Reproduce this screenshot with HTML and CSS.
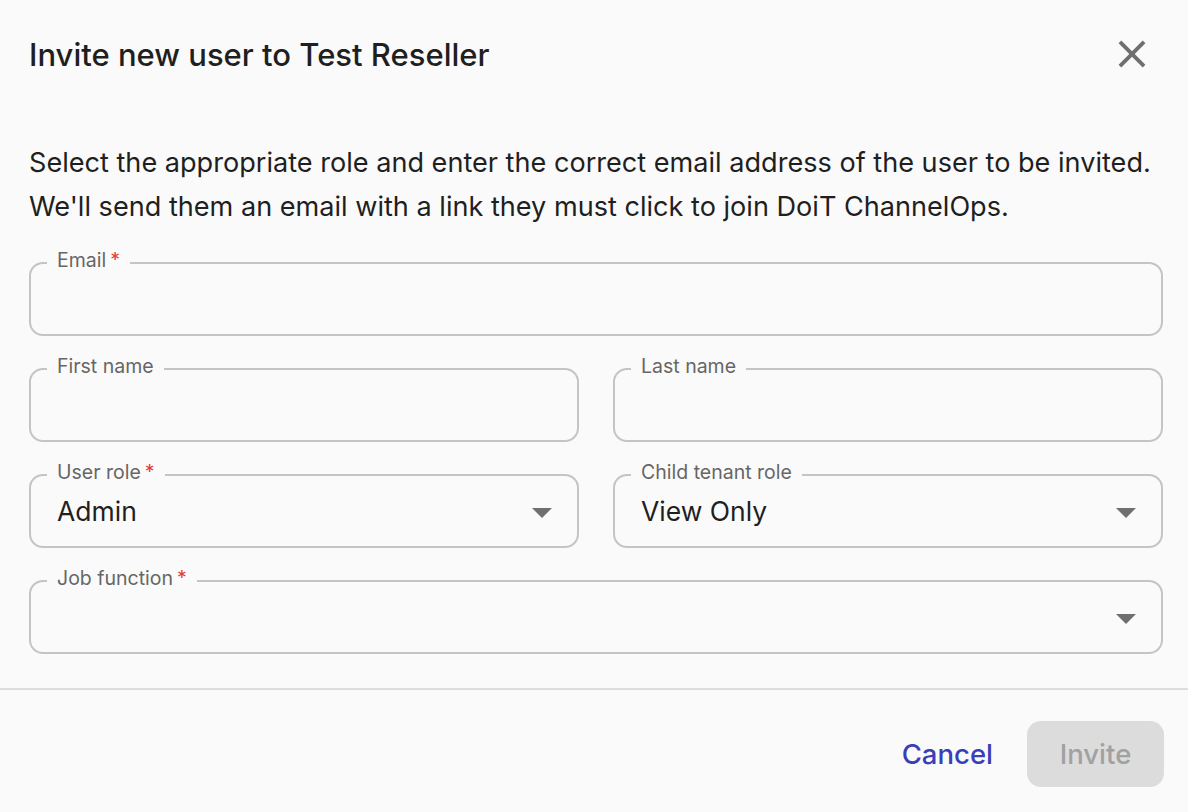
FILE: index.html
```html
<!DOCTYPE html>
<html>
<head>
<meta charset="utf-8">
<link rel="stylesheet" href="styles.css">
</head>
<body>
<div class="dialog">
  <div class="header">
    <h1 class="title">Invite new user to Test Reseller</h1>
    <button class="close" aria-label="Close">
      <svg width="46" height="46" viewBox="0 0 24 24"><path d="M19 6.41 17.59 5 12 10.59 6.41 5 5 6.41 10.59 12 5 17.59 6.41 19 12 13.41 17.59 19 19 17.59 13.41 12z" fill="#6f6f6f"/></svg>
    </button>
  </div>
  <div class="content">
    <p class="desc">Select the appropriate role and enter the correct email address of the user to be invited. We'll send them an email with a link they must click to join DoiT ChannelOps.</p>
    <div class="form">
      <fieldset class="field full"><legend><span class="lbl">Email<span class="req">*</span></span></legend><div class="value"></div></fieldset>
      <div class="row">
        <fieldset class="field"><legend><span class="lbl">First name</span></legend><div class="value"></div></fieldset>
        <fieldset class="field"><legend><span class="lbl">Last name</span></legend><div class="value"></div></fieldset>
      </div>
      <div class="row">
        <fieldset class="field select"><legend><span class="lbl">User role<span class="req">*</span></span></legend><div class="value">Admin</div><span class="arrow"></span></fieldset>
        <fieldset class="field select"><legend><span class="lbl">Child tenant role</span></legend><div class="value">View Only</div><span class="arrow"></span></fieldset>
      </div>
      <fieldset class="field full select"><legend><span class="lbl">Job function<span class="req">*</span></span></legend><div class="value"></div><span class="arrow"></span></fieldset>
    </div>
  </div>
  <div class="actions">
    <button class="btn cancel">Cancel</button>
    <button class="btn invite" disabled>Invite</button>
  </div>
</div>
</body>
</html>
```
FILE: styles.css
```css
html, body {
  margin: 0;
  padding: 0;
  background: #fafafa;
}
body {
  font-family: Inter, "Noto Sans", sans-serif;
  color: #1f1f1f;
}
.dialog {
  width: 1188px;
  height: 812px;
  display: flex;
  flex-direction: column;
  box-sizing: border-box;
}
.header {
  display: flex;
  align-items: center;
  justify-content: space-between;
  padding: 29px 32px 0 29px;
  height: 50px;
}
.title {
  margin: 0;
  font-size: 31px;
  font-weight: 500;
  letter-spacing: 0;
  color: #1f1f1f;
}
.close {
  background: none;
  border: none;
  padding: 0;
  width: 48px;
  height: 48px;
  display: flex;
  align-items: center;
  justify-content: center;
  cursor: pointer;
}
.content {
  padding: 62px 20px 0 29px;
}
.desc {
  margin: 0 0 23px;
  font-size: 27.1px;
  line-height: 44px;
  color: #1f1f1f;
}
.form {
  display: flex;
  flex-direction: column;
  gap: 22px;
}
.row {
  display: grid;
  grid-template-columns: 1fr 1fr;
  gap: 34px;
  margin-right: 5px;
}
.field {
  position: relative;
  margin: 0 5px 0 0;
  padding: 0 16px;
  border: 2px solid #c4c4c4;
  border-radius: 14px;
  height: 84px;
  box-sizing: border-box;
  min-width: 0;
}
.row .field {
  margin: 0;
}
.field legend {
  padding: 0 10px;
  margin-left: 0;
  font-size: 19.5px;
  color: #666;
  line-height: 22px;
}
.lbl {
  position: relative;
  top: -3px;
}
.field .req {
  color: #e53935;
  margin-left: 4px;
}
.value {
  font-size: 26.5px;
  line-height: 40px;
  padding: 5px 0 0 10px;
  color: #1f1f1f;
  height: 40px;
}
.arrow {
  position: absolute;
  right: 25px;
  top: 22px;
  width: 0;
  height: 0;
  border-left: 10px solid transparent;
  border-right: 10px solid transparent;
  border-top: 10px solid #6f6f6f;
}
.actions {
  margin-top: auto;
  border-top: 2px solid #dddddd;
  display: flex;
  justify-content: flex-end;
  align-items: center;
  gap: 34px;
  padding: 30px 24px 24px;
  height: 124px;
  box-sizing: border-box;
}
.btn {
  font-family: Inter, "Noto Sans", sans-serif;
  font-size: 27.5px;
  font-weight: 500;
  border: none;
  background: none;
}
.cancel {
  color: #3a3eb8;
  padding: 0;
}
.invite {
  width: 137px;
  height: 66px;
  border-radius: 14px;
  background: #dcdcdc;
  color: #a1a1a1;
}
```
